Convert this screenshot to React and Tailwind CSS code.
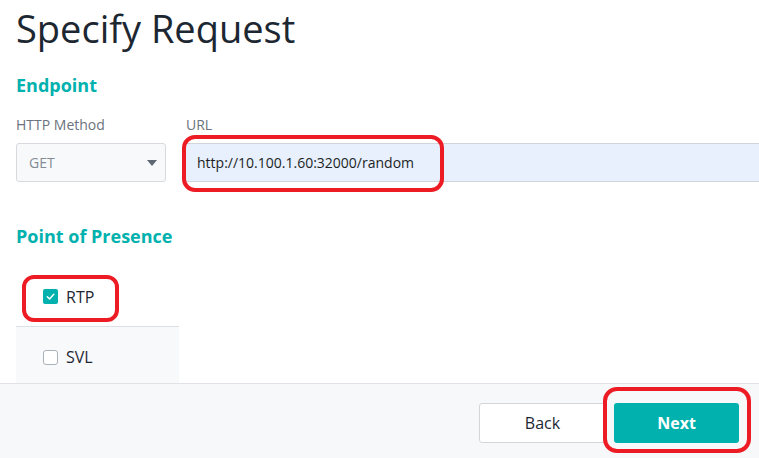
import { useState } from "react";

const pops = [
  { name: "RTP", checked: true },
  { name: "SVL", checked: false },
];

function CheckBox({ checked }) {
  if (checked) {
    return (
      <span className="w-[15px] h-[15px] rounded-[2px] bg-[#00b1ae] flex items-center justify-center">
        <svg width="11" height="11" viewBox="0 0 12 12" fill="none">
          <path d="M2.5 6.3 5 8.6 9.6 3.6" stroke="#fff" strokeWidth="1.6" strokeLinecap="round" strokeLinejoin="round" />
        </svg>
      </span>
    );
  }
  return <span className="w-[15px] h-[15px] rounded-[3px] border-[1.5px] border-[#a9b1bb] bg-white" />;
}

export default function App() {
  const [url] = useState("http://10.100.1.60:32000/random");

  return (
    <div
      className="relative w-[759px] h-[458px] overflow-hidden bg-white flex flex-col text-[#1d2833]"
      style={{ fontFamily: '"Open Sans", "Noto Sans", sans-serif' }}
    >
      <div className="flex-1 overflow-hidden px-4">
        <h1 className="mt-[2px] text-[38px] leading-[52px] font-normal text-[#1c2732]">Specify Request</h1>

        <h2 className="mt-[19px] text-[18px] leading-[24px] font-bold text-[#00b1ae]">Endpoint</h2>
        <div className="mt-[18px] flex gap-5">
          <div className="w-[150px] shrink-0">
            <div className="text-[14px] leading-[20px] text-[#6b737d]">HTTP Method</div>
            <div className="mt-2 h-[39px] rounded-[3px] border border-[#d6dade] bg-[#f8f9fb] flex items-center justify-between pl-3 pr-[8px]">
              <span className="text-[14px] text-[#838b95]">GET</span>
              <svg width="10" height="6" viewBox="0 0 10 6">
                <path d="M0 0h10L5 6z" fill="#5e6873" />
              </svg>
            </div>
          </div>
          <div className="flex-1 -mr-4">
            <div className="text-[14px] leading-[20px] text-[#6b737d]">URL</div>
            <div className="mt-2 h-[39px] border-y border-[#d0d5db] bg-[#e8f0fe] flex items-center pl-[11px]">
              <span className="text-[14px] text-[#1b1f24]">{url}</span>
            </div>
          </div>
        </div>

        <h2 className="mt-[42px] text-[18px] leading-[24px] font-bold text-[#00b1ae]">Point of Presence</h2>
        <div className="mt-[19px] w-[163px]">
          {pops.map((p, i) => (
            <div
              key={p.name}
              className={
                i === 0
                  ? "h-[60px] flex items-center gap-2 pl-[27px] bg-white border-b border-[#dcdfe3]"
                  : "h-[60px] flex items-center gap-2 pl-[27px] bg-[#f8f9fb]"
              }
            >
              <CheckBox checked={p.checked} />
              <span className="text-[16px] text-[#1d2833]">{p.name}</span>
            </div>
          ))}
        </div>
      </div>

      <div className="h-[75px] shrink-0 border-t border-[#dfe2e6] bg-[#f7f8fa] flex items-start justify-end gap-2 pt-[19px] pr-5">
        <button className="w-[127px] h-[40px] rounded-[3px] border border-[#d3d7dc] bg-white text-[16px] text-[#1d2833]">
          Back
        </button>
        <button className="w-[125px] h-[40px] rounded-[3px] bg-[#00b1ae] text-[16px] font-bold text-white">
          Next
        </button>
      </div>

      {/* red markup drawn over the screenshot */}
      <div className="absolute left-[182px] top-[135px] w-[262px] h-[57px] border-4 border-[#ed1c24] rounded-[13px]" />
      <div className="absolute left-[22px] top-[275px] w-[97px] h-[47px] border-4 border-[#ed1c24] rounded-[12px]" />
      <div className="absolute left-[603px] top-[387px] w-[148px] h-[66px] border-4 border-[#ed1c24] rounded-[14px]" />
    </div>
  );
}
